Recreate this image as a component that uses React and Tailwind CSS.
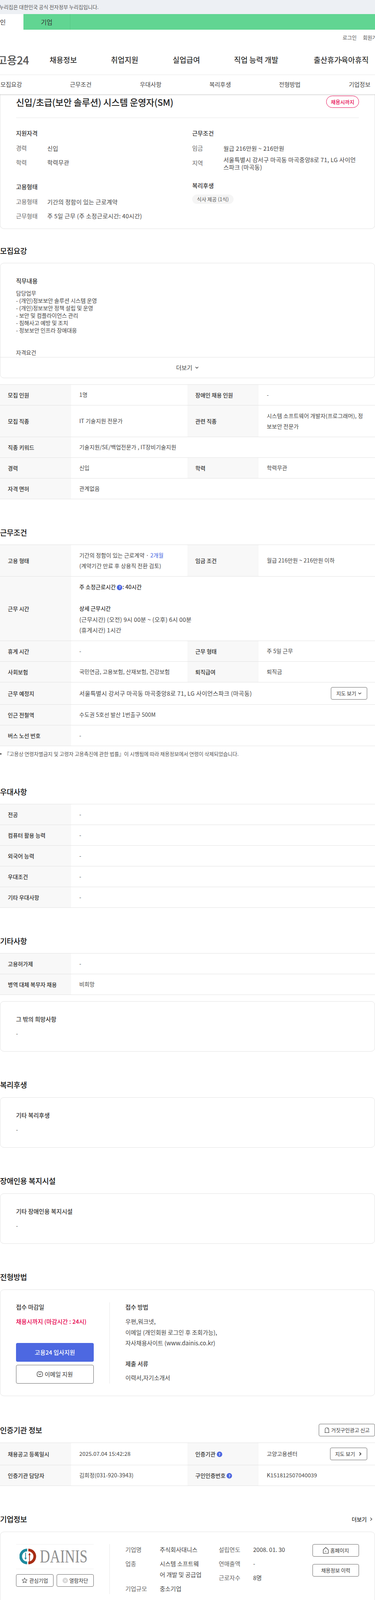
const FONT = "font-['Noto_Sans_CJK_KR','Noto_Sans',sans-serif]";

function Help() {
  return (
    <span className="inline-flex w-[14px] h-[14px] rounded-full bg-[#4d68e1] text-white text-[9px] font-bold items-center justify-center align-[1px]">?</span>
  );
}

function Chevron({ dir = "down", bold }) {
  return (
    <svg width="10" height="10" viewBox="0 0 10 10" fill="none" stroke="#333" strokeWidth={bold ? 1.8 : 1.3}>
      {dir === "down" ? <path d="M1.5 3.2 5 6.8l3.5-3.6" /> : <path d="M3.2 1.2 7 5 3.2 8.8" />}
    </svg>
  );
}

function Heading({ children, className = "" }) {
  return <h2 className={"text-[19px] leading-[28px] font-medium text-[#111] tracking-[-0.2px] " + className}>{children}</h2>;
}

function Label({ children }) {
  return (
    <div className="w-[182px] shrink-0 bg-[#f8f8f8] pl-[20px] flex items-center text-[14px] font-medium text-[#333]">
      <span>{children}</span>
    </div>
  );
}

function Value({ children, className = "" }) {
  return <div className={"flex-1 min-w-0 pl-[21px] pr-[20px] flex items-center text-[14px] tracking-[0.2px] leading-[27.5px] text-[#444] break-all " + className}>{children}</div>;
}

function Row({ h, cells }) {
  return (
    <div className={"flex border-b border-[#e2e2e2] " + h}>
      <Label>{cells[0]}</Label>
      {cells.length === 2 ? (
        <Value>{cells[1]}</Value>
      ) : (
        <>
          <div className="w-[298px] shrink-0 flex">
            <Value>{cells[1]}</Value>
          </div>
          <Label>{cells[2]}</Label>
          <Value>{cells[3]}</Value>
        </>
      )}
    </div>
  );
}

function Table({ children, className = "" }) {
  return <div className={"border-t border-[#e2e2e2] " + className}>{children}</div>;
}

function SimpleCard({ title, className = "" }) {
  return (
    <div className={"h-[129px] border border-[#e2e2e2] rounded-[10px] px-[40px] pt-[33px] " + className}>
      <div className="text-[15px] leading-[24px] font-medium text-[#333]">{title}</div>
      <div className="mt-[13px] text-[14px] leading-[22px] text-[#444]">-</div>
    </div>
  );
}

function SummaryRow({ label, children }) {
  return (
    <div className="flex items-center">
      <span className="w-[80px] shrink-0 text-[15px] text-[#666]">{label}</span>
      <span className="w-[346px] text-[15px] tracking-[0.3px] leading-[19px] text-[#444] break-all">{children}</span>
    </div>
  );
}

function OutlineBtn({ children, className = "" }) {
  return (
    <div className={"flex items-center justify-center gap-[4px] border border-[#666] rounded-[4px] text-[13px] tracking-normal text-[#333] bg-white " + className}>
      {children}
    </div>
  );
}

export default function App() {
  return (
    <div className={"w-[960px] h-[4114px] overflow-hidden bg-white " + FONT}>
      {/* gov banner */}
      <div className="h-[36px] bg-[#edf0f4] flex items-center text-[13px] text-[#555]">
        <span className="ml-[-2px] whitespace-nowrap">누리집은 대한민국 공식 전자정부 누리집입니다.</span>
      </div>
      <div className="h-[40px] bg-[#61d592] flex">
        <div className="w-[60px] bg-white flex items-center text-[16px] text-[#333] overflow-hidden">
          <span>인</span>
        </div>
        <div className="w-[120px] border-r border-[#58c786] flex items-center justify-center text-[16px] text-[#333]">기업</div>
      </div>
      <div className="h-[40px] flex items-center text-[13px] text-[#555] pl-[877px] gap-[16px] whitespace-nowrap">
        <span>로그인</span>
        <span>회원가입</span>
      </div>
      {/* main nav */}
      <div className="h-[76px] border-b border-[#e8e8e8] flex items-center pb-[1px] text-[19px] font-medium text-[#333] whitespace-nowrap overflow-hidden">
        <span className="w-[127px] shrink-0 text-[28px] font-medium text-[#555] flex justify-end pr-[53px] tracking-[-0.5px]">고용24</span>
        <span className="w-[157px] shrink-0">채용정보</span>
        <span className="w-[158px] shrink-0">취업지원</span>
        <span className="w-[157px] shrink-0">실업급여</span>
        <span className="w-[204px] shrink-0">직업 능력 개발</span>
        <span className="shrink-0">출산휴가<span className="inline-block mx-[-5px]">·</span>육아휴직</span>
      </div>
      {/* anchors */}
      <div className="h-[49px] flex items-center text-[15px] text-[#444] pl-[1px] shadow-[0_2px_3px_rgba(0,0,0,0.15)] relative z-10 bg-white">
        <span className="w-[178px] shrink-0">모집요강</span>
        <span className="w-[179px] shrink-0">근무조건</span>
        <span className="w-[178px] shrink-0">우대사항</span>
        <span className="w-[178px] shrink-0">복리후생</span>
        <span className="w-[179px] shrink-0">전형방법</span>
        <span className="shrink-0">기업정보</span>
      </div>

      {/* summary card */}
      <div className="h-[345px] border border-t-0 border-[#e2e2e2] rounded-b-[10px] px-[40px]">
        <div className="h-[61px] border-b border-[#e8e8e8] flex justify-between pt-[4px]">
          <h1 className="text-[23px] leading-[30px] font-medium text-[#222] pt-[1px] tracking-[-0.2px]">신입/초급(보안 솔루션) 시스템 운영자(SM)</h1>
          <div className="w-[84px] h-[31px] rounded-full border border-[#e6004d] text-[#e6004d] text-[13px] font-medium flex items-center justify-center">채용시까지</div>
        </div>
        <div className="grid grid-cols-[451px_1fr] pt-[27px]">
          <div>
            <div className="text-[15px] leading-[24px] font-medium text-[#333]">지원자격</div>
            <div className="mt-[15px] flex flex-col gap-[14px]">
              <SummaryRow label="경력">신입</SummaryRow>
              <SummaryRow label="학력">학력무관</SummaryRow>
            </div>
            <div className="mt-[39px] text-[15px] leading-[24px] font-medium text-[#333]">고용형태</div>
            <div className="mt-[15px] flex flex-col gap-[14px]">
              <SummaryRow label="고용형태">기간의 정함이 있는 근로계약</SummaryRow>
              <SummaryRow label="근무형태">주 5일 근무 (주 소정근로시간: 40시간)</SummaryRow>
            </div>
          </div>
          <div>
            <div className="text-[15px] leading-[24px] font-medium text-[#333]">근무조건</div>
            <div className="mt-[15px] flex flex-col gap-[8px]">
              <SummaryRow label="임금">월급 216만원 ~ 216만원</SummaryRow>
              <SummaryRow label="지역">서울특별시 강서구 마곡동 마곡중앙8로 71, LG 사이언스파크 (마곡동)</SummaryRow>
            </div>
            <div className="mt-[26px] text-[15px] leading-[24px] font-medium text-[#333]">복리후생</div>
            <div className="mt-[11px] inline-flex h-[24px] items-center px-[12px] rounded-full bg-[#f5f5f5] text-[13px] text-[#555]">식사 제공 (1식)</div>
          </div>
        </div>
      </div>

      {/* 모집요강 */}
      <Heading className="mt-[42px]">모집요강</Heading>
      <div className="mt-[17px] h-[295px] border border-[#e2e2e2] rounded-[10px] flex flex-col overflow-hidden">
        <div className="h-[240px] overflow-hidden px-[40px] pt-[34px] text-[14px] leading-[19px] text-[#444]">
          <div className="text-[15px] leading-[22px] font-medium text-[#333] mb-[11px]">직무내용</div>
          <div>담당업무</div>
          <div>- (개인)정보보안 솔루션 시스템 운영</div>
          <div>- (개인)정보보안 정책 설립 및 운영</div>
          <div>- 보안 및 컴플라이언스 관리</div>
          <div>- 침해사고 예방 및 조치</div>
          <div>- 정보보안 인프라 장애대응</div>
          <div className="h-[38px]" />
          <div>자격요건</div>
        </div>
        <div className="flex-1 border-t border-[#e2e2e2] flex items-center justify-center gap-[7px] text-[15px] text-[#444]">
          더보기 <Chevron />
        </div>
      </div>

      <Table className="mt-[16px]">
        <Row h="h-[53px]" cells={["모집 인원", "1명", "장애인 채용 인원", "-"]} />
        <Row h="h-[81px]" cells={["모집 직종", "IT 기술지원 전문가", "관련 직종", <div className="w-[250px]">시스템 소프트웨어 개발자(프로그래머), 정보보안 전문가</div>]} />
        <Row h="h-[53px]" cells={["직종 키워드", "기술지원/SE/백업전문가 , IT장비기술지원"]} />
        <Row h="h-[53px]" cells={["경력", "신입", "학력", "학력무관"]} />
        <Row h="h-[53px]" cells={["자격 면허", "관계없음"]} />
      </Table>

      {/* 근무조건 */}
      <Heading className="mt-[71px]">근무조건</Heading>
      <Table className="mt-[17px]">
        <Row
          h="h-[81px]"
          cells={[
            "고용 형태",
            <div>
              <div>기간의 정함이 있는 근로계약 · <span className="text-[#3f5fe0]">2개월</span></div>
              <div>(계약기간 만료 후 상용직 전환 검토)</div>
            </div>,
            "임금 조건",
            "월급 216만원 ~ 216만원 이하",
          ]}
        />
        <Row
          h="h-[165px]"
          cells={[
            "근무 시간",
            <div className="text-[15px] tracking-[0.3px]">
              <div className="text-[14px] tracking-normal font-medium text-[#333]">주 소정근로시간 <Help />: 40시간</div>
              <div className="h-[27.5px]" />
              <div className="text-[14px] tracking-normal font-medium text-[#333]">상세 근무시간</div>
              <div>(근무시간) (오전) 9시 00분 ~ (오후) 6시 00분</div>
              <div>(휴게시간) 1시간</div>
            </div>,
          ]}
        />
        <Row h="h-[53px]" cells={["휴게 시간", "-", "근무 형태", "주 5일 근무"]} />
        <Row h="h-[53px]" cells={["사회보험", "국민연금, 고용보험, 산재보험, 건강보험", "퇴직급여", "퇴직금"]} />
        <div className="flex border-b border-[#e2e2e2] h-[57px]">
          <Label>근무 예정지</Label>
          <Value className="justify-between">
            <span className="text-[15px] tracking-[0.4px]">서울특별시 강서구 마곡동 마곡중앙8로 71, LG 사이언스파크 (마곡동)</span>
            <OutlineBtn className="w-[93px] h-[32px]">지도 보기 <Chevron /></OutlineBtn>
          </Value>
        </div>
        <Row h="h-[53px]" cells={["인근 전철역", "수도권 5호선 발산 1번출구 500M"]} />
        <Row h="h-[53px]" cells={["버스 노선 번호", "-"]} />
      </Table>
      <div className="mt-[8px] flex items-center text-[13px] leading-[24px] text-[#555]">
        <span className="w-[4px] h-[4px] rounded-full bg-[#555] mr-[7px]" />
        『고용상 연령차별금지 및 고령자 고용촉진에 관한 법률』이 시행됨에 따라 채용정보에서 연령이 삭제되었습니다.
      </div>

      {/* 우대사항 */}
      <Heading className="mt-[71px]">우대사항</Heading>
      <Table className="mt-[17px]">
        <Row h="h-[53px]" cells={["전공", "-"]} />
        <Row h="h-[53px]" cells={["컴퓨터 활용 능력", "-"]} />
        <Row h="h-[53px]" cells={["외국어 능력", "-"]} />
        <Row h="h-[53px]" cells={["우대조건", "-"]} />
        <Row h="h-[53px]" cells={["기타 우대사항", "-"]} />
      </Table>

      {/* 기타사항 */}
      <Heading className="mt-[71px]">기타사항</Heading>
      <Table className="mt-[17px]">
        <Row h="h-[53px]" cells={["고용허가제", "-"]} />
        <Row h="h-[53px]" cells={["병역 대체 복무자 채용", "비희망"]} />
      </Table>
      <SimpleCard title="그 밖의 희망사항" className="mt-[16px]" />

      <Heading className="mt-[71px]">복리후생</Heading>
      <SimpleCard title="기타 복리후생" className="mt-[18px]" />

      <Heading className="mt-[71px]">장애인용 복지시설</Heading>
      <SimpleCard title="기타 장애인용 복지시설" className="mt-[18px]" />

      {/* 전형방법 */}
      <Heading className="mt-[71px]">전형방법</Heading>
      <div className="mt-[18px] h-[273px] border border-[#e2e2e2] rounded-[10px] px-[40px] pt-[32px] flex">
        <div className="w-[240px] shrink-0 h-[208px] border-r border-[#e8e8e8] pr-[40px]">
          <div className="text-[15px] leading-[24px] font-medium text-[#333]">접수 마감일</div>
          <div className="mt-[13px] text-[15px] leading-[24px] font-medium text-[#e6004d] whitespace-nowrap">채용시까지 (마감시간 : 24시)</div>
          <div className="mt-[43px] h-[48px] rounded-[4px] bg-[#4d68e1] text-white text-[15px] font-medium flex items-center justify-center">고용24 입사지원</div>
          <OutlineBtn className="mt-[8px] h-[48px] !text-[15px]">
            <svg width="16" height="16" viewBox="0 0 16 16" fill="none" stroke="#333" strokeWidth="1.3">
              <rect x="1" y="2" width="14" height="12" rx="4" />
              <path d="M4.5 6.5 8 9.5l3.5-3" />
            </svg>
            이메일 지원
          </OutlineBtn>
        </div>
        <div className="pl-[40px]">
          <div className="text-[15px] leading-[24px] font-medium text-[#333]">접수 방법</div>
          <div className="mt-[11px] text-[15px] leading-[27.5px] text-[#444]">
            <div>우편,워크넷,</div>
            <div>이메일 (개인회원 로그인 후 조회가능),</div>
            <div>자사채용사이트 (www.dainis.co.kr)</div>
          </div>
          <div className="mt-[27px] text-[15px] leading-[24px] font-medium text-[#333]">제출 서류</div>
          <div className="mt-[10px] text-[15px] leading-[27.5px] text-[#444]">이력서,자기소개서</div>
        </div>
      </div>

      {/* 인증기관 */}
      <div className="mt-[71px] h-[32px] flex items-center justify-between">
        <Heading>인증기관 정보</Heading>
        <OutlineBtn className="w-[144px] h-[32px]">
          <svg width="14" height="16" viewBox="0 0 14 16" fill="none" stroke="#333" strokeWidth="1.1">
            <path d="M1 14.5h12M2.3 14.5V6.5a4.7 4.7 0 0 1 9.4 0v8" />
            <path d="M8.5 3.5 9.5 6" />
          </svg>
          거짓구인광고 신고
        </OutlineBtn>
      </div>
      <Table className="mt-[16px]">
        <div className="flex border-b border-[#e2e2e2] h-[57px]">
          <Label>채용공고 등록일시</Label>
          <div className="w-[298px] shrink-0 flex"><Value>2025.07.04 15:42:28</Value></div>
          <Label><>인증기관 <Help /></></Label>
          <Value className="justify-between">
            <span>고양고용센터</span>
            <OutlineBtn className="w-[95px] h-[32px] !gap-[8px]">지도 보기 <Chevron dir="right" bold /></OutlineBtn>
          </Value>
        </div>
        <Row h="h-[53px]" cells={["인증기관 담당자", "김희정(031-920-3943)", <>구인인증번호 <Help /></>, "K151812507040039"]} />
      </Table>

      {/* 기업정보 */}
      <div className="mt-[71px] flex items-center justify-between pr-[5px]">
        <Heading>기업정보</Heading>
        <div className="flex items-center gap-[6px] text-[14px] font-medium text-[#333]">더보기 <Chevron dir="right" /></div>
      </div>
      <div className="mt-[18px] h-[193px] border border-[#e2e2e2] rounded-[10px] px-[40px] pt-[31px] flex">
        <div className="w-[240px] shrink-0 h-[128px] border-r border-[#e8e8e8] pr-[40px]">
          <div className="h-[64px] border-y border-[#f0f0f0] flex items-center pl-[9px]">
            <svg width="176" height="44" viewBox="0 0 176 44" fill="none">
              <path d="M19.5 1.5a20 20 0 0 0 0 40v-7a13 13 0 0 1 0-26z" fill="#1d8a9e" />
              <path d="M22.5 1.5a20 20 0 0 1 0 40v-7a13 13 0 0 0 0-26z" fill="#a82d14" />
              <path d="M15.5 12v14" stroke="#1d8a9e" strokeWidth="2" />
              <path d="M12.5 25l3 5 3-5z" fill="#1d8a9e" />
              <path d="M25.5 17v18" stroke="#a82d14" strokeWidth="2" />
              <path d="M22.5 18l3-6 3 6z" fill="#a82d14" />
              <text x="52" y="37" textLength="122" lengthAdjust="spacingAndGlyphs" fontFamily="'Liberation Serif',serif" fontSize="46" fill="#8f8f8f">DAINIS</text>
            </svg>
          </div>
          <div className="mt-[13px] flex gap-[8px]">
            <OutlineBtn className="w-[96px] h-[32px]">
              <svg width="16" height="16" viewBox="0 0 16 16" fill="none" stroke="#444" strokeWidth="1.1">
                <path d="M8 1.5l1.9 4.2 4.6.5-3.4 3.1.9 4.6L8 11.6 4 13.9l.9-4.6L1.5 6.2l4.6-.5z" strokeLinejoin="round" />
              </svg>
              관심기업
            </OutlineBtn>
            <OutlineBtn className="flex-1 h-[32px]">
              <span className="w-[14px] h-[14px] rounded-full bg-[#d8d8d8] text-white text-[10px] leading-none flex items-center justify-center">✕</span>
              열람차단
            </OutlineBtn>
          </div>
        </div>
        <div className="pl-[40px] flex-1 flex text-[15px] text-[#444]">
          <div className="w-[239px] shrink-0">
            <div className="grid grid-cols-[88px_112px] leading-[28px] gap-y-[8px]">
              <span className="text-[#666]">기업명</span><span>주식회사대니스</span>
              <span className="text-[#666]">업종</span><span className="break-all">시스템 소프트웨어 개발 및 공급업</span>
              <span className="text-[#666]">기업규모</span><span>중소기업</span>
            </div>
          </div>
          <div className="w-[240px] shrink-0">
            <div className="grid grid-cols-[88px_1fr] leading-[28px] gap-y-[8px]">
              <span className="text-[#666]">설립연도</span><span>2008. 01. 30</span>
              <span className="text-[#666]">연매출액</span><span>-</span>
              <span className="text-[#666]">근로자수</span><span>8명</span>
            </div>
          </div>
          <div className="w-[119px] shrink-0">
            <OutlineBtn className="h-[32px]">
              <svg width="16" height="18" viewBox="0 0 16 18" fill="none" stroke="#333" strokeWidth="1.2">
                <path d="M1.5 16.5V7.5L8 1.5l6.5 6v9z" strokeLinejoin="round" />
                <path d="M8 10v3" />
              </svg>
              홈페이지
            </OutlineBtn>
            <OutlineBtn className="mt-[19px] h-[32px]">채용정보 이력</OutlineBtn>
          </div>
        </div>
      </div>
    </div>
  );
}
